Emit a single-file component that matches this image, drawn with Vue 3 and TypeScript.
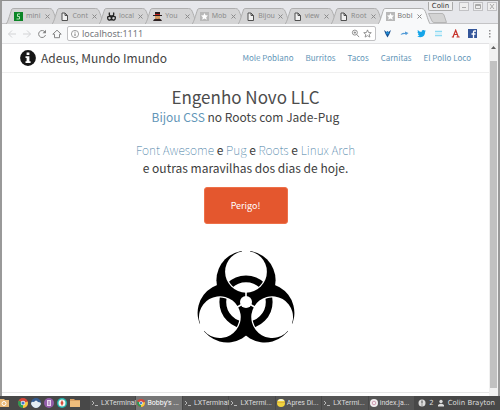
<script setup lang="ts">
import { ref } from 'vue'

interface Tab { title: string; icon: string }
interface Task { title: string; icon: string }

const tabs: Tab[] = [
  { title: 'mini', icon: 'green' },
  { title: 'Cont', icon: 'page' },
  { title: 'local', icon: 'bio' },
  { title: 'You', icon: 'spy' },
  { title: 'Mob', icon: 'star' },
  { title: 'Bijou', icon: 'page' },
  { title: 'view', icon: 'page' },
  { title: 'Root', icon: 'page' },
  { title: 'Bobl', icon: 'star' },
]
const activeTab = ref(8)

const tasks: Task[] = [
  { title: 'LXTerminal', icon: 'term' },
  { title: "Bobby's ...", icon: 'chrome' },
  { title: 'LXTerminal', icon: 'term' },
  { title: 'LXTermi...', icon: 'term' },
  { title: 'Apres Di...', icon: 'face' },
  { title: 'LXTermi...', icon: 'term' },
  { title: 'index.ja...', icon: 'disc' },
]
const activeTask = ref(1)

const links: string[] = ['Mole Poblano', 'Burritos', 'Tacos', 'Carnitas', 'El Pollo Loco']
const lobes: number[] = [0, 120, 240]
const address = ref('localhost:1111')
</script>

<template>
  <div class="desktop">
    <div class="window">
      <div class="titlebar">
        <div class="tabs" role="tablist">
          <button
            v-for="(tab, i) in tabs"
            :key="i"
            class="tab"
            :class="{ active: i === activeTab }"
            role="tab"
            :aria-selected="i === activeTab"
            @click="activeTab = i"
          >
            <svg class="tab-shape" viewBox="0 0 53 16" preserveAspectRatio="none" aria-hidden="true">
              <path d="M0 16 C2 15 5 2 6 1 Q6.500 .5 8 .5 H44 Q46 .5 47 2 C49 5 51 15 53 16" />
            </svg>
            <svg class="favicon" viewBox="0 0 9 9" aria-hidden="true">
              <template v-if="tab.icon === 'green'">
                <rect width="9" height="9" fill="#0b8526" />
                <path d="M6 2H3.500V4.500H5.500V7H2.500" fill="none" stroke="#b7e7bc" stroke-width="1" />
              </template>
              <path v-else-if="tab.icon === 'page'" d="M2 1H5L7.500 3.500V8.500H2ZM5 1V3.500H7.500" fill="#f0f0f0" stroke="#505050" />
              <g v-else-if="tab.icon === 'bio'" fill="none" stroke="#222" stroke-width="1.300">
                <path d="M2.500 .5Q1.500 4 4.500 4Q7.500 4 6.500 .5M.7 4.500Q.3 8.500 3 8Q4.500 7.500 4.500 5.500Q4.500 7.500 6 8Q8.700 8.500 8.300 4.500M.7 5Q2 3.500 4.500 5.500Q7 3.500 8.300 5" />
              </g>
              <template v-else-if="tab.icon === 'spy'">
                <path d="M2 0H7V3H9V4H0V3H2Z" fill="#24191a" />
                <path d="M2 2H7V3H2Z" fill="#c21d1d" />
                <path d="M2 4H7V7H2Z" fill="#d69a62" />
                <path d="M0 9Q1 6 4.500 7Q8 6 9 9Z" fill="#2b2021" />
              </template>
              <template v-else>
                <rect width="9" height="9" fill="#b8b8b8" />
                <path d="M4.500 1L5.500 3.300L8 3.500L6.200 5.200L6.800 7.700L4.500 6.400L2.200 7.700L2.800 5.200L1 3.500L3.500 3.300Z" fill="#fff" />
              </template>
            </svg>
            <span class="tab-title">{{ tab.title }}</span>
            <svg class="tab-close" viewBox="0 0 5 5" aria-hidden="true"><path d="M.5 .5L4.500 4.500M4.500 .5L.5 4.500" stroke="#8b8b8b" /></svg>
          </button>
        </div>
        <button class="new-tab" aria-label="+">
          <svg viewBox="0 0 19 10" aria-hidden="true"><path d="M.5 .5H14Q15.500 .5 16 2L18.500 9.500H6Q4.500 9.500 4 8Z" fill="#d3d3d3" stroke="#b5b5b5" /></svg>
        </button>
        <div class="win-controls">
          <button class="profile">Colin</button>
          <button class="wc" aria-label="−"><svg viewBox="0 0 8 7"><path d="M2 4.500H6" stroke="#aaa" /></svg></button>
          <button class="wc" aria-label="□"><svg viewBox="0 0 8 7"><path d="M1.500 1.500H6.500V5.500H1.500ZM1.500 2.500H6.500" fill="none" stroke="#aaa" /></svg></button>
          <button class="wc" aria-label="×"><svg viewBox="0 0 8 7"><path d="M2 1L6 6M6 1L2 6" stroke="#aaa" /></svg></button>
        </div>
      </div>

      <div class="toolbar">
        <button class="tool" aria-label="←"><svg viewBox="0 0 10 10"><path d="M9 5H1.500M5 1.500L1.500 5L5 8.500" fill="none" stroke="#d2d3d5" /></svg></button>
        <button class="tool" aria-label="→"><svg viewBox="0 0 10 10"><path d="M1 5H8.500M5 1.500L8.500 5L5 8.500" fill="none" stroke="#d2d3d5" /></svg></button>
        <button class="tool" aria-label="↻"><svg viewBox="0 0 10 10"><path d="M8 3A3.500 3.500 0 1 0 8.500 6" fill="none" stroke="#858585" /><path d="M9 .8V4.300H5.500Z" fill="#858585" /></svg></button>
        <button class="tool" aria-label="⌂"><svg viewBox="0 0 10 10"><path d="M.8 5.200L5 1.200L9.200 5.200H7.500V8.700H2.500V5.200Z" fill="none" stroke="#858585" /></svg></button>
        <label class="omnibox">
          <svg class="info" viewBox="0 0 10 10" aria-hidden="true"><circle cx="5" cy="5" r="3.600" fill="none" stroke="#888" stroke-width=".8" /><path d="M5 4.500V7M5 2.700V3.600" stroke="#777" /></svg>
          <input v-model="address" type="text" spellcheck="false" />
          <svg class="box-icon" viewBox="0 0 10 10" aria-hidden="true"><circle cx="4.300" cy="4" r="2.800" fill="none" stroke="#858585" /><path d="M6.300 6L9 9M3 4H5.600M4.300 2.700V5.300" stroke="#858585" /></svg>
          <svg class="box-icon" viewBox="0 0 10 10" aria-hidden="true"><path d="M5 1L6.200 3.900L9.200 4.100L6.900 6L7.700 9L5 7.400L2.300 9L3.100 6L.8 4.100L3.800 3.900Z" fill="none" stroke="#808080" stroke-width=".9" /></svg>
        </label>
        <div class="extensions">
          <svg viewBox="0 0 9 9"><path d="M1 1L3.500 3L4.500 2L5.500 3L8 1L6.500 5L4.500 8.500L2.500 5Z" fill="#174f91" /><circle cx="4.500" cy="4" r="1.500" fill="#1f8ad0" /></svg>
          <svg viewBox="0 0 9 9"><path d="M.5 6Q2 3 5 4L5 2.500L8.500 4L6 6L5 5Q3 5 .5 6Z" fill="#539bd7" /></svg>
          <svg viewBox="0 0 9 9"><path d="M.8 1Q2.500 3 4.500 3Q4.500 .8 6.500 1Q7 1 7.700 1.600L8.700 1.400L8.100 3Q8 8 3.500 8.300Q1.500 8.300 .2 7.300Q1.700 7.300 2.500 6.500Q1 6 1 5L1.700 5Q.5 4 .5 3L1 3Q.3 2 .8 1Z" fill="#15a5e9" /></svg>
          <svg viewBox="0 0 9 9"><path d="M1 2.500H8M1 6.500H8" stroke="#8ddaf3" stroke-width="1.500" /><path d="M1 4.500H8" stroke="#d5f2fa" /></svg>
          <svg viewBox="0 0 9 9"><path d="M.8 8H3M5.500 8H8.700M2 8L4.700 1.200L7.300 8M3 5.500H6" fill="none" stroke="#c8342c" stroke-width="1.200" /></svg>
          <svg viewBox="0 0 9 9"><rect width="9" height="9" fill="#34569a" /><path d="M8 2H6.500Q5.500 2 5.500 3V9M3.500 5H7.500" fill="none" stroke="#fff" stroke-width="1.300" /></svg>
          <svg viewBox="0 0 9 9"><path d="M4 1H5.500V2.500H4ZM4 4H5.500V5.500H4ZM4 7H5.500V8.500H4Z" fill="#909090" /></svg>
        </div>
      </div>

      <div class="viewport">
        <div class="page">
          <header class="site-header">
            <svg class="brand-icon" viewBox="0 0 16 16" aria-hidden="true">
              <circle cx="8" cy="8" r="7.900" fill="#161616" />
              <path d="M6.600 2.500H9.400V5H6.600ZM5.500 6.300H9.400V11.200H10.600V13H5.500V11.200H6.600V8H5.500Z" fill="#fff" />
            </svg>
            <span class="brand">Adeus, Mundo Imundo</span>
            <nav class="site-nav">
              <a v-for="link in links" :key="link" href="#">{{ link }}</a>
            </nav>
          </header>

          <main class="content">
            <h1>Engenho Novo LLC</h1>
            <h2><a href="#">Bijou CSS</a> no Roots com Jade-Pug</h2>
            <p class="lead">
              <a href="#">Font Awesome</a> e <a href="#">Pug</a> e <a href="#">Roots</a> e <a href="#">Linux Arch</a><br />
              e outras maravilhas dos dias de hoje.
            </p>
            <button class="danger">Perigo!</button>
            <svg class="biohazard" viewBox="-50 -52 100 94" aria-hidden="true">
              <defs>
                <clipPath id="lobe-area">
                  <circle v-for="a in lobes" :key="a" cy="-30.200" r="19.600" :transform="`rotate(${a})`" />
                </clipPath>
              </defs>
              <circle v-for="a in lobes" :key="'o' + a" cy="-21.700" r="29.600" :transform="`rotate(${a})`" />
              <g v-for="a in lobes" :key="'i' + a" :transform="`rotate(${a})`" fill="#fff">
                <circle cy="-30.200" r="20.900" />
                <rect x="-4" y="-53" width="8" height="8" />
                <rect x="-0.800" y="-12" width="1.600" height="8" />
              </g>
              <circle r="23.200" fill="none" stroke="#000" stroke-width="6.800" clip-path="url(#lobe-area)" />
              <circle r="6" fill="#fff" />
            </svg>
          </main>
        </div>
        <div class="scrollbar" aria-hidden="true">
          <svg viewBox="0 0 7 18"><path d="M3.500 3L6 6H1Z" fill="#606060" /></svg>
          <div class="thumb"></div>
        </div>
      </div>
    </div>

    <footer class="taskbar">
      <div class="launchers">
        <svg viewBox="0 0 10 10"><path d="M0 1H4L5 2H9V9H0Z" fill="#eab976" /><circle cx="4" cy="5.500" r="2" fill="none" stroke="#fff" /></svg>
        <svg viewBox="0 0 10 10"><circle cx="5" cy="5" r="5" fill="#d94739" /><path d="M5 5L.7 2.500A5 5 0 0 0 5 10Z" fill="#299b54" /><path d="M5 5L9.700 3.500A5 5 0 0 1 5 10Z" fill="#f2cb3f" /><circle cx="5" cy="5" r="2.300" fill="#f3f3f3" /><circle cx="5" cy="5" r="1.600" fill="#4279cc" /></svg>
        <svg viewBox="0 0 10 10"><circle cx="5" cy="5" r="5" fill="#365d91" /><path d="M0 6Q0 3 3 4Q5 1 7 4Q10 4 10 6Q8 10 5 10Q2 10 0 6Z" fill="#e4edf3" /></svg>
        <svg viewBox="0 0 10 10"><circle cx="5" cy="5" r="5" fill="#925da9" /><path d="M3 2H7V8H3Z" fill="#e8d8ed" /><path d="M4 4H6M4 6H6" stroke="#925da9" /></svg>
        <svg viewBox="0 0 10 10"><circle cx="5" cy="5" r="5" fill="#26b6ae" /><circle cx="5" cy="5" r="3.500" fill="#f5f5f0" /><path d="M5 2L6.500 5L5 8L3.500 5Z" fill="#d94c3a" /></svg>
        <svg viewBox="0 0 10 10"><path d="M0 1H4L5 2H10V9H0Z" fill="#d9a162" /><path d="M0 3H10V9H0Z" fill="#efbd7c" /></svg>
      </div>
      <div class="tasks">
        <button v-for="(task, i) in tasks" :key="i" class="task" :class="{ active: i === activeTask }" @click="activeTask = i">
          <svg viewBox="0 0 8 8" aria-hidden="true">
            <path v-if="task.icon === 'term'" d="M1 2L3 4L1 6M4 6.500H7" fill="none" stroke="#c4c4c4" stroke-width=".9" />
            <template v-else-if="task.icon === 'chrome'">
              <circle cx="4" cy="4" r="4" fill="#d94739" /><path d="M4 4L.5 2.200A4 4 0 0 0 4 8Z" fill="#299b54" /><path d="M4 4L7.800 3A4 4 0 0 1 4 8Z" fill="#f2cb3f" /><circle cx="4" cy="4" r="1.600" fill="#4279cc" stroke="#fff" stroke-width=".6" />
            </template>
            <template v-else-if="task.icon === 'face'">
              <circle cx="4" cy="4" r="4" fill="#f1d43e" /><path d="M.5 2A4 4 0 0 1 7.500 2Z" fill="#f3f1d0" /><path d="M0 3.500H8" stroke="#d9a53a" stroke-width=".7" />
            </template>
            <template v-else>
              <circle cx="4" cy="4" r="4" fill="#f1eef0" /><circle cx="4" cy="4" r="1.800" fill="none" stroke="#cf9bb2" />
            </template>
          </svg>
          <span>{{ task.title }}</span>
        </button>
      </div>
      <div class="tray">
        <svg viewBox="0 0 8 8" aria-hidden="true"><circle cx="4" cy="4" r="3.500" fill="#dcdcdc" /><path d="M4 1.500V4.500M4 5.500V6.500" stroke="#484848" /></svg>
        <span>2</span>
        <svg viewBox="0 0 8 8" aria-hidden="true"><circle cx="4" cy="2.500" r="1.700" fill="#dcdcdc" /><path d="M1 7.500V6Q4 3.500 7 6V7.500Z" fill="#dcdcdc" /></svg>
        <span>Colin Brayton</span>
      </div>
    </footer>
  </div>
</template>

<style>
body { margin: 0; }
</style>

<style scoped>
* { box-sizing: border-box; }
button { margin: 0; padding: 0; border: 0; background: none; font: inherit; color: inherit; }
svg { display: block; flex: none; }
a { text-decoration: none; color: #6396b8; }

.desktop {
  display: flex;
  flex-direction: column;
  min-height: 100vh;
  overflow: hidden;
  background: #fff;
  font-family: "Noto Sans CJK SC", "Noto Sans", sans-serif;
}
.window {
  flex: 1;
  display: flex;
  flex-direction: column;
  border: 1px solid #8e8e8e;
  border-left: 2px solid #999;
  border-right: 2px solid #999;
  border-bottom: 0;
}
.titlebar {
  display: flex;
  height: 23px;
  background: #e6e7eb;
  border-bottom: 1px solid #c4c4c6;
}
.tabs {
  flex: 1;
  display: grid;
  grid-template-columns: repeat(9, minmax(0, 1fr));
  padding: 7px 0 0 4px;
}
.tab {
  position: relative;
  display: flex;
  align-items: center;
  height: 16px;
  margin-right: -6px;
  padding: 0 8px;
  font: 7px/14px "Noto Sans", sans-serif;
  color: #8b8b8b;
}
.tab.active { z-index: 1; color: #777; }
.tab-shape {
  position: absolute;
  inset: 0;
  width: 100%;
  height: 100%;
  fill: #d4d4d5;
  stroke: #adadad;
}
.tab.active .tab-shape { fill: #f8f9fa; }
.favicon { position: relative; width: 9px; height: 9px; }
.tab-title {
  position: relative;
  flex: 1;
  min-width: 0;
  margin-left: 3px;
  white-space: nowrap;
  text-align: left;
}
.tab-close { position: relative; width: 5px; height: 5px; }
.new-tab { width: 19px; padding-top: 11px; margin-left: 4px; }
.new-tab svg { width: 19px; height: 10px; }
.win-controls {
  display: flex;
  gap: 4px;
  padding-top: 1px;
  margin-left: -19px;
  margin-right: 1px;
}
.profile {
  width: 25px;
  height: 9px;
  margin-right: 2px;
  border: 1px solid #aaa;
  border-top: 0;
  border-radius: 0 0 2px 2px;
  background: #eee;
  font: 7px/7px "DejaVu Sans", sans-serif;
  color: #333;
  text-align: center;
}
.wc { width: 10px; height: 9px; border: 1px solid #c2c2c5; background: #eee; }
.wc svg { width: 8px; height: 7px; }

.toolbar {
  display: flex;
  align-items: center;
  height: 19px;
  padding: 0 5px;
  gap: 5px;
  background: #f8f9fa;
}
.tool { width: 10px; height: 10px; }
.tool svg { width: 10px; height: 10px; }
.omnibox {
  flex: 1;
  display: flex;
  align-items: center;
  height: 15px;
  padding: 0 3px 0 2px;
  border: 1px solid #c1c1c3;
  border-radius: 2px;
  background: #fff;
}
.info { width: 10px; height: 10px; }
.omnibox input {
  flex: 1;
  min-width: 0;
  border: 0;
  outline: 0;
  padding: 0 0 0 2px;
  background: none;
  font: 9px/13px "Noto Sans", sans-serif;
  color: #74777c;
}
.box-icon { width: 9px; height: 9px; margin-left: 3px; }
.extensions { display: flex; gap: 8px; margin-left: 2px; }
.extensions svg { width: 9px; height: 9px; }
.extensions svg:last-child { margin-right: -1px; }

.viewport { flex: 1; display: flex; }
.page { flex: 1; min-width: 0; background: #fff; border-bottom: 1px solid #e6e6e6; margin-bottom: 3px; }
.site-header {
  display: flex;
  align-items: center;
  height: 30px;
  padding: 0 18px;
  border-top: 1px solid #e2e2e4;
  border-bottom: 1px solid #efefef;
}
.brand-icon { width: 16px; height: 16px; }
.brand { margin-left: 5px; font-size: 12px; line-height: 20px; color: #444; white-space: nowrap; }
.site-nav { display: flex; gap: 12px; margin-left: auto; font-size: 8px; line-height: 14px; white-space: nowrap; }
.content { display: flex; flex-direction: column; align-items: center; padding-top: 11px; text-align: center; }
h1 { margin: 0; font-size: 17px; line-height: 25px; font-weight: 400; color: #4c4c4c; }
h2 { margin: 0; font-size: 12px; line-height: 15px; font-weight: 400; color: #444; }
.lead { margin: 17px 0 10px; font-size: 12px; line-height: 18px; font-weight: 400; color: #3c3c3c; }
.lead a { font-weight: 100; color: #3f7ba3; }
.danger {
  width: 84px;
  height: 37px;
  border: 1px solid #ee7048;
  border-radius: 3px;
  background: #e4572e;
  color: #fff;
  font-size: 9px;
}
.biohazard { width: 100px; height: 94px; margin-top: 26px; }
.scrollbar { display: flex; flex-direction: column; width: 9px; padding: 0 1px 8px; background: #f1f1f1; }
.scrollbar svg { width: 7px; height: 18px; }
.thumb { flex: 1; background: #c1c1c1; }

.taskbar {
  display: flex;
  align-items: center;
  height: 14px;
  padding-right: 5px;
  background: #484848;
  color: #ddd;
  font: 7px/12px "DejaVu Sans", sans-serif;
}
.launchers { display: flex; gap: 3px; width: 90px; }
.launchers svg { width: 10px; height: 10px; }
.launchers svg:first-child { margin-right: 5px; }
.tasks { flex: 1; min-width: 0; display: grid; grid-template-columns: repeat(7, minmax(0, 1fr)); gap: 1px; font-family: Roboto, sans-serif; }
.task {
  display: flex;
  align-items: center;
  gap: 2px;
  height: 14px;
  padding-left: 1px;
  background: #555;
  white-space: nowrap;
}
.task.active { background: #777; color: #fff; }
.task svg, .tray svg { width: 8px; height: 8px; }
.tray { display: flex; align-items: center; gap: 3px; padding-left: 4px; white-space: nowrap; }
</style>
